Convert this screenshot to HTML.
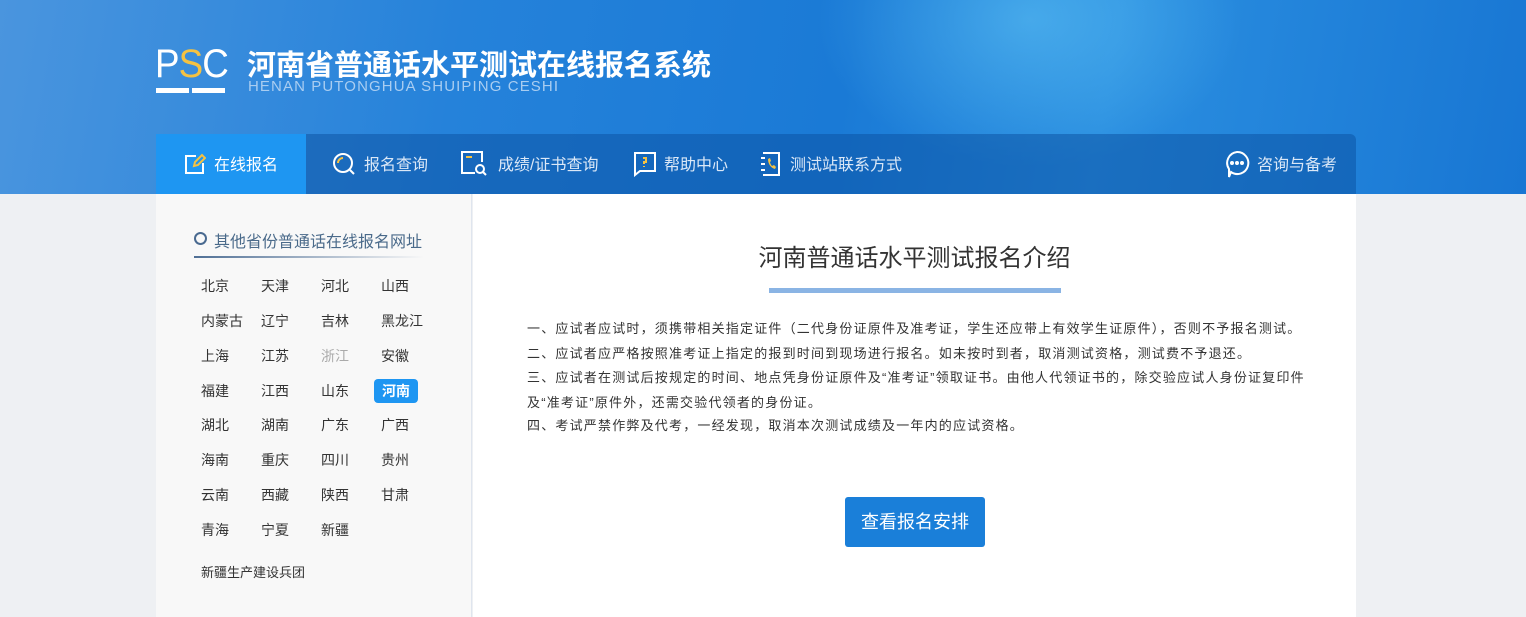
<!DOCTYPE html>
<html><head><meta charset="utf-8"><style>
*{margin:0;padding:0;box-sizing:border-box}
body{width:1526px;height:617px;overflow:hidden;background:#eef0f3;font-family:"Liberation Sans","Noto Sans CJK SC",sans-serif;position:relative}
.hdr{position:absolute;left:0;top:0;width:1526px;height:194px;background:linear-gradient(100deg,#4a95de 0%,#2582da 30%,#1a7ad6 55%,#2a8ee0 72%,#1876d3 100%)}
.glow{position:absolute;left:780px;top:0;width:500px;height:194px;background:radial-gradient(ellipse at 50% 10%,rgba(120,220,255,.4),rgba(120,220,255,0) 60%)}
.a{position:absolute;white-space:nowrap}
.nav{position:absolute;left:156px;top:134px;width:1200px;height:60px;background:rgba(10,80,160,.5);border-radius:6px 6px 0 0}
.act{position:absolute;left:156px;top:134px;width:150px;height:60px;background:#1e96f2}
.left{position:absolute;left:156px;top:194px;width:316px;height:423px;background:#f8f8f8;border-right:1px solid #dfe5ee}
.right{position:absolute;left:473px;top:194px;width:883px;height:423px;background:#fff}
.pv{position:absolute;font-size:14px;color:#333}
.p{position:absolute;left:527px;font-size:13px;color:#333;letter-spacing:1.2px}
.n{position:absolute;top:151px;color:#dbe8f7;font-size:16px;white-space:nowrap}
</style></head><body>
<div class="hdr"><div class="glow"></div></div>
<div class="a" style="left:155px;top:42px;font-size:40px;color:#fff;letter-spacing:-1px;line-height:44px;transform:scaleX(0.92);transform-origin:left">P<span style="color:#f5c242">S</span>C</div>
<div class="a" style="left:156px;top:88px;width:33px;height:5px;background:#fff"></div>
<div class="a" style="left:192px;top:88px;width:33px;height:5px;background:#fff"></div>
<div class="a" style="left:247px;top:42px;font-size:29px;color:#fff;font-weight:bold">河南省普通话水平测试在线报名系统</div>
<div class="a" style="left:248px;top:78px;font-size:15px;color:#a9cdf1;letter-spacing:1.1px">HENAN PUTONGHUA SHUIPING CESHI</div>
<div class="nav"></div>
<div class="act"></div>
<svg class="a" style="left:184px;top:153px" width="22" height="22" viewBox="0 0 22 22" fill="none" stroke="#fff" stroke-width="2"><path d="M12 3H2v17h17V10"/><path d="M10 13l1-4 7-7 3 3-7 7z" stroke="#f5c242"/></svg>
<div class="n" style="left:214px;color:#fff">在线报名</div>
<svg class="a" style="left:332px;top:152px" width="24" height="24" viewBox="0 0 24 24" fill="none" stroke="#fff" stroke-width="2"><circle cx="11" cy="11" r="9"/><path d="M6 11a5 5 0 0 1 5-5" stroke="#f5c242"/><path d="M18 18l4 4"/></svg>
<div class="n" style="left:364px">报名查询</div>
<svg class="a" style="left:461px;top:151px" width="28" height="26" viewBox="0 0 28 26" fill="none" stroke="#fff" stroke-width="2"><path d="M14 22H1V1h20v10"/><path d="M5 6h6" stroke="#f5c242"/><circle cx="19" cy="18" r="4"/><path d="M22 21l3 3"/></svg>
<div class="n" style="left:498px">成绩/证书查询</div>
<svg class="a" style="left:633px;top:151px" width="24" height="26" viewBox="0 0 24 26" fill="none" stroke="#fff" stroke-width="2"><path d="M2 2h20v18H7l-5 4z"/><path d="M10 7h3v4h-2v2M11 15v1" stroke="#f5c242"/></svg>
<div class="n" style="left:664px">帮助中心</div>
<svg class="a" style="left:759px;top:151px" width="24" height="26" viewBox="0 0 24 26" fill="none" stroke="#fff" stroke-width="2"><path d="M4 2h16v22H4"/><path d="M2 7h4M2 13h4M2 19h4"/><path d="M9 8c0 5 3 9 7 10l1-2-2-2-2 1c-1-1-2-3-2-4l1-1-1-3z" fill="#f5c242" stroke="none"/></svg>
<div class="n" style="left:790px">测试站联系方式</div>
<svg class="a" style="left:1224px;top:150px" width="26" height="28" viewBox="0 0 26 28" fill="none" stroke="#fff" stroke-width="2"><path d="M13 2a11 11 0 1 1-6 20l-2 5V19A11 11 0 0 1 13 2z"/><circle cx="8" cy="13" r="1" fill="#fff"/><circle cx="13" cy="13" r="1" fill="#fff"/><circle cx="18" cy="13" r="1" fill="#fff"/></svg>
<div class="n" style="left:1257px">咨询与备考</div>

<div class="left"></div>
<div class="right"></div>
<div class="a" style="left:194px;top:232px;width:13px;height:13px;border:2px solid #4a6a90;border-radius:50%"></div>
<div class="a" style="left:214px;top:228px;font-size:16px;color:#4a6a8a">其他省份普通话在线报名网址</div>
<div class="a" style="left:194px;top:256px;width:230px;height:2px;background:linear-gradient(90deg,#4f6f95,rgba(79,111,149,0))"></div>
<div class="pv" style="left:201px;top:276px">北京</div><div class="pv" style="left:261px;top:276px">天津</div><div class="pv" style="left:321px;top:276px">河北</div><div class="pv" style="left:381px;top:276px">山西</div>
<div class="pv" style="left:201px;top:311px">内蒙古</div><div class="pv" style="left:261px;top:311px">辽宁</div><div class="pv" style="left:321px;top:311px">吉林</div><div class="pv" style="left:381px;top:311px">黑龙江</div>
<div class="pv" style="left:201px;top:346px">上海</div><div class="pv" style="left:261px;top:346px">江苏</div><div class="pv" style="left:321px;top:346px;color:#aaa">浙江</div><div class="pv" style="left:381px;top:346px">安徽</div>
<div class="pv" style="left:201px;top:381px">福建</div><div class="pv" style="left:261px;top:381px">江西</div><div class="pv" style="left:321px;top:381px">山东</div>
<div class="a" style="left:374px;top:379px;width:44px;height:24px;background:#1e96f2;border-radius:4px;color:#fff;font-size:14px;font-weight:bold;text-align:center;line-height:24px">河南</div>
<div class="pv" style="left:201px;top:415px">湖北</div><div class="pv" style="left:261px;top:415px">湖南</div><div class="pv" style="left:321px;top:415px">广东</div><div class="pv" style="left:381px;top:415px">广西</div>
<div class="pv" style="left:201px;top:450px">海南</div><div class="pv" style="left:261px;top:450px">重庆</div><div class="pv" style="left:321px;top:450px">四川</div><div class="pv" style="left:381px;top:450px">贵州</div>
<div class="pv" style="left:201px;top:485px">云南</div><div class="pv" style="left:261px;top:485px">西藏</div><div class="pv" style="left:321px;top:485px">陕西</div><div class="pv" style="left:381px;top:485px">甘肃</div>
<div class="pv" style="left:201px;top:520px">青海</div><div class="pv" style="left:261px;top:520px">宁夏</div><div class="pv" style="left:321px;top:520px">新疆</div>
<div class="pv" style="left:201px;top:562px;font-size:13px">新疆生产建设兵团</div>

<div class="a" style="left:473px;width:883px;text-align:center;top:238px;font-size:24px;color:#333">河南普通话水平测试报名介绍</div>
<div class="a" style="left:769px;top:288px;width:292px;height:5px;background:#8ab4e4"></div>
<div class="p" style="top:318px">一、应试者应试时，须携带相关指定证件（二代身份证原件及准考证，学生还应带上有效学生证原件），否则不予报名测试。</div>
<div class="p" style="top:343px">二、应试者应严格按照准考证上指定的报到时间到现场进行报名。如未按时到者，取消测试资格，测试费不予退还。</div>
<div class="p" style="top:367px">三、应试者在测试后按规定的时间、地点凭身份证原件及“准考证”领取证书。由他人代领证书的，除交验应试人身份证复印件</div>
<div class="p" style="top:392px">及“准考证”原件外，还需交验代领者的身份证。</div>
<div class="p" style="top:415px">四、考试严禁作弊及代考，一经发现，取消本次测试成绩及一年内的应试资格。</div>
<div class="a" style="left:845px;top:497px;width:140px;height:50px;background:#1a7fd9;border-radius:3px;color:#fff;font-size:18px;text-align:center;line-height:50px">查看报名安排</div>
</body></html>
